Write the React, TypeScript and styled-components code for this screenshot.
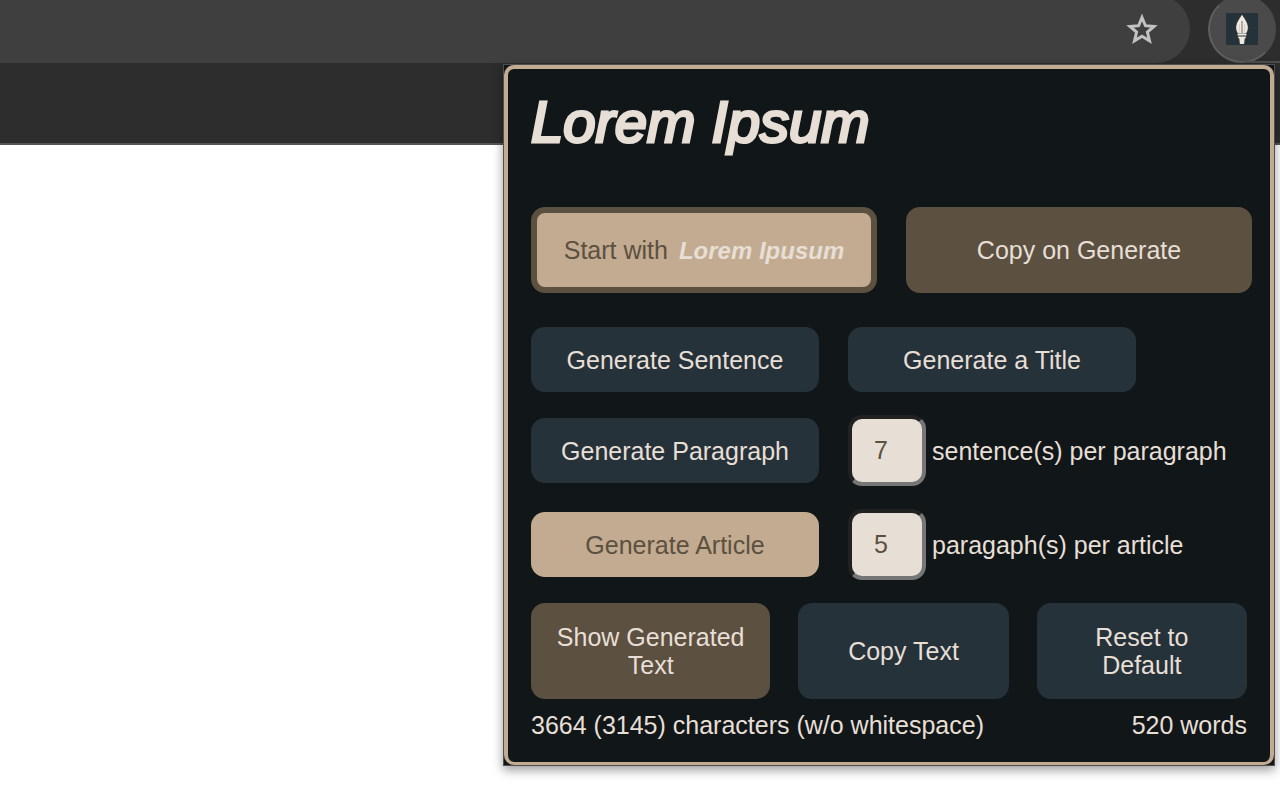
import React from "react";
import styled, { createGlobalStyle } from "styled-components";

const color = {
  night: "#111719",
  slate: "#26323a",
  tan: "#c2ab90",
  brown: "#5c5040",
  cream: "#e7dfd6",
};

const GlobalStyle = createGlobalStyle`
  *, *::before, *::after { box-sizing: border-box; }
  body {
    margin: 0;
    background: #ffffff;
    font-family: "Liberation Sans", Arial, sans-serif;
  }
  button, input { font: inherit; }
`;

const Page = styled.div`
  position: relative;
  min-height: 100vh;
  overflow: hidden;
`;

const Toolbar = styled.header`
  display: flex;
  align-items: flex-end;
  gap: 18px;
  height: 63px;
  overflow: hidden;
  background: #2d2d2d;
`;

const AddressBar = styled.div`
  flex: 1;
  display: flex;
  align-items: center;
  justify-content: flex-end;
  height: 68px;
  padding-right: 30px;
  border-radius: 0 34px 34px 0;
  background: #3f3f3f;
`;

const IconButton = styled.button`
  display: flex;
  padding: 0;
  border: 0;
  background: none;
  color: #c2c2c2;
`;

const ActionSlot = styled.div`
  position: relative;
  width: 72px;
  height: 68px;

  &::after {
    content: "";
    position: absolute;
    right: 0;
    bottom: 0;
    width: 36px;
    height: 2px;
    background: #4e4e4e;
  }
`;

const ActionButton = styled.button`
  display: flex;
  align-items: center;
  justify-content: center;
  width: 68px;
  height: 68px;
  padding: 0;
  border: 2px solid #5f5f5f;
  border-right-color: #4a4a4a;
  border-top-color: #4a4a4a;
  border-radius: 50%;
  background: #4a4a4a;
`;

const BookmarkBar = styled.div`
  height: 82px;
  border-bottom: 2px solid #555555;
  background: #2d2d2d;
`;

const Popup = styled.main`
  position: absolute;
  top: 64px;
  right: 5px;
  width: 772px;
  max-width: calc(100% - 10px);
  border: 1px solid #4d4f50;
  background: ${color.night};
  box-shadow: 0 4px 10px rgba(0, 0, 0, 0.4);
`;

const Frame = styled.div`
  display: flex;
  flex-direction: column;
  padding: 23px 18px 23px 23px;
  border: 4px solid ${color.tan};
  border-bottom-width: 3px;
  border-radius: 10px;
  color: ${color.cream};
  font-size: 25px;
  line-height: 28px;
`;

const Title = styled.h1`
  margin: 0 0 55px;
  font-size: 58px;
  font-style: italic;
  font-weight: 400;
  line-height: 60px;
  -webkit-text-stroke: 3px currentColor;
`;

const OptionRow = styled.div`
  display: grid;
  grid-template-columns: 1fr 1fr;
  gap: 29px;
  margin-bottom: 34px;
`;

type Tone = "slate" | "brown" | "tan";

const Button = styled.button<{ $tone?: Tone }>`
  height: 65px;
  padding: 0 16px;
  border: 0;
  border-radius: 14px;
  background: ${({ $tone = "slate" }) => color[$tone]};
  color: ${({ $tone }) => ($tone === "tan" ? color.brown : color.cream)};
  line-height: 28px;
  cursor: pointer;
`;

const OptionButton = styled(Button)`
  height: 86px;
  border: 6px solid ${color.brown};
  white-space: nowrap;
`;

const Sample = styled.em`
  margin-left: 11px;
  color: ${color.cream};
  font-size: 24px;
  font-weight: 700;
`;

const Controls = styled.div`
  display: flex;
  flex-direction: column;
  gap: 23px;
  margin-right: 5px;
`;

const GenerateRow = styled.div`
  display: grid;
  grid-template-columns: 288px 1fr;
  align-items: center;
  gap: 29px;
`;

const TitleButton = styled(Button)`
  width: 288px;
`;

const Field = styled.label`
  display: flex;
  align-items: center;
  gap: 6px;
  white-space: nowrap;
`;

const CountInput = styled.input`
  width: 78px;
  height: 71px;
  padding: 0 0 0 22px;
  border: 4px solid;
  border-color: #212121 #767676 #767676 #212121;
  border-radius: 14px;
  background: ${color.cream};
  color: ${color.brown};
  appearance: textfield;

  &::-webkit-inner-spin-button {
    appearance: none;
    margin: 0;
  }
`;

const OutputRow = styled.div`
  display: grid;
  grid-template-columns: 239fr 210fr 210fr;
  gap: 28px;
`;

const OutputButton = styled(Button)`
  height: 96px;
`;

const Narrow = styled.span`
  display: inline-block;
  max-width: 120px;
`;

const Stats = styled.footer`
  display: flex;
  justify-content: space-between;
  margin: 12px 5px 0 0;
`;

function StarIcon() {
  return (
    <svg width="36" height="36" viewBox="0 0 36 36" aria-hidden="true">
      <path
        d="M18 6.500l3.400 8.200 8.600.700-6.600 5.700 2.100 8.700L18 25.200l-7.500 4.600 2.100-8.700L6 15.400l8.600-.700z"
        fill="none"
        stroke="currentColor"
        strokeWidth="3"
      />
    </svg>
  );
}

function PenIcon() {
  return (
    <svg width="32" height="32" viewBox="0 0 32 32" aria-hidden="true">
      <rect width="32" height="32" fill="#26323a" />
      <path
        d="M16 1C14 5 9.800 9 9.800 14.500c0 2.500.7 4.500 2.200 6.500h8c1.500-2 2.200-4 2.200-6.500C22.200 9 18 5 16 1z"
        fill="#efe8e1"
        stroke="#111719"
        strokeWidth="0.6"
      />
      <path d="M16 8v12" stroke="#85817d" strokeWidth="1.200" />
      <path d="M13.500 11v9M18.500 11v9" stroke="#cfc8c1" strokeWidth="0.700" />
      <path d="M11.500 21h9v1.500h-9zM12 23.400h8l-.6 2.200h-6.800zM13.300 25.600h5.400l-.6 5.400h-4.200z" fill="#efe8e1" />
    </svg>
  );
}

export default function App() {
  return (
    <>
      <GlobalStyle />
      <Page>
        <Toolbar>
          <AddressBar>
            <IconButton type="button" aria-label="Bookmark this tab">
              <StarIcon />
            </IconButton>
          </AddressBar>
          <ActionSlot>
            <ActionButton type="button" aria-label="Lorem Ipsum extension">
              <PenIcon />
            </ActionButton>
          </ActionSlot>
        </Toolbar>
        <BookmarkBar />
        <Popup>
          <Frame>
            <Title>Lorem Ipsum</Title>
            <OptionRow>
              <OptionButton type="button" $tone="tan" aria-pressed="true">
                Start with<Sample>Lorem Ipusum</Sample>
              </OptionButton>
              <OptionButton type="button" $tone="brown" aria-pressed="false">
                Copy on Generate
              </OptionButton>
            </OptionRow>
            <Controls>
              <GenerateRow>
                <Button type="button">Generate Sentence</Button>
                <TitleButton type="button">Generate a Title</TitleButton>
              </GenerateRow>
              <GenerateRow>
                <Button type="button">Generate Paragraph</Button>
                <Field>
                  <CountInput type="number" min={1} defaultValue={7} />
                  sentence(s) per paragraph
                </Field>
              </GenerateRow>
              <GenerateRow>
                <Button type="button" $tone="tan">Generate Article</Button>
                <Field>
                  <CountInput type="number" min={1} defaultValue={5} />
                  paragaph(s) per article
                </Field>
              </GenerateRow>
              <OutputRow>
                <OutputButton type="button" $tone="brown">Show Generated Text</OutputButton>
                <OutputButton type="button">Copy Text</OutputButton>
                <OutputButton type="button">
                  <Narrow>Reset to Default</Narrow>
                </OutputButton>
              </OutputRow>
            </Controls>
            <Stats>
              <span>3664 (3145) characters (w/o whitespace)</span>
              <span>520 words</span>
            </Stats>
          </Frame>
        </Popup>
      </Page>
    </>
  );
}
